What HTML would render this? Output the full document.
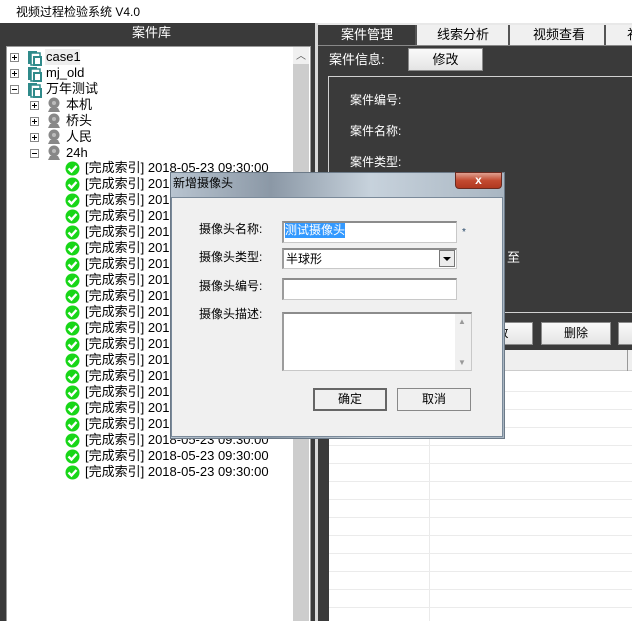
<!DOCTYPE html>
<html><head><meta charset="utf-8"><style>
*{margin:0;padding:0;box-sizing:border-box}
body{width:632px;height:621px;overflow:hidden;background:#fff;position:relative;font-family:"Liberation Sans","Noto Sans CJK SC","WenQuanYi Zen Hei",sans-serif;font-size:12px;color:#000}
.a{position:absolute}
.t{position:absolute;white-space:nowrap;line-height:16px}
.w{color:#fff}
.btn{position:absolute;background:linear-gradient(#fafafa,#e4e4e4);border:1px solid #8a8a8a;text-align:center;line-height:20px;font-size:12px}
.exp{position:absolute;width:9px;height:9px;border:1px solid #888;background:#fff}
.exp:before{content:"";position:absolute;left:1px;top:3px;width:5px;height:1px;background:#000}
.exp.p:after{content:"";position:absolute;left:3px;top:1px;width:1px;height:5px;background:#000}
.inp{position:absolute;background:#fff;border:1px solid #c8c8c8;border-top:2px solid #8c8c8c;border-left:2px solid #9c9c9c}
</style></head><body>
<div class="t" style="left:16px;top:4px;font-size:12px">视频过程检验系统 V4.0</div>
<div class="a" style="left:0;top:23px;width:315px;height:598px;background:#3a3a3a"></div>
<div class="t w" style="left:132px;top:25px;font-size:13px">案件库</div>
<div class="a" style="left:6px;top:46px;width:305px;height:575px;background:#fff;border:1px solid #9a9a9a;border-bottom:none"></div>
<div class="a" style="left:293px;top:47px;width:16px;height:574px;background:#cdcdcd"></div>
<div class="a" style="left:293px;top:47px;width:16px;height:17px;background:#f0f0f0"></div>
<div class="t" style="left:296px;top:49px;font-size:10px;color:#555">︿</div>
<div class="a" style="left:315px;top:23px;width:3px;height:598px;background:#d8d8d8"></div>
<div id="tree"></div>
<div class="a" style="left:318px;top:23px;width:314px;height:598px;background:#3a3a3a"></div>
<div class="a" style="left:318px;top:23px;width:314px;height:2px;background:#e8e8e8"></div>
<div class="a" style="left:415px;top:25px;width:217px;height:20px;background:#f0f0f0"></div>
<div class="a" style="left:508px;top:25px;width:2px;height:20px;background:#555"></div>
<div class="a" style="left:604px;top:25px;width:2px;height:20px;background:#555"></div>
<div class="a" style="left:415px;top:25px;width:2px;height:20px;background:#555"></div>
<div class="t w" style="left:341px;top:27px;font-size:13px">案件管理</div>
<div class="t" style="left:437px;top:27px;font-size:13px">线索分析</div>
<div class="t" style="left:533px;top:27px;font-size:13px">视频查看</div>
<div class="t" style="left:627px;top:27px;font-size:13px">礼</div>
<div class="a" style="left:318px;top:45px;width:314px;height:1px;background:#888"></div>
<div class="t w" style="left:329px;top:52px;font-size:13px">案件信息:</div>
<div class="btn" style="left:408px;top:48px;width:75px;height:23px;line-height:21px;font-size:13px">修改</div>
<div class="a" style="left:328px;top:76px;width:310px;height:237px;border:1px solid #d0d0d0;border-right:none"></div>
<div class="t w" style="left:350px;top:92px">案件编号:</div>
<div class="t w" style="left:350px;top:123px">案件名称:</div>
<div class="t w" style="left:350px;top:154px">案件类型:</div>
<div class="t w" style="left:507px;top:250px;font-size:13px">至</div>
<div class="btn" style="left:460px;top:322px;width:73px;height:23px">修改</div>
<div class="btn" style="left:541px;top:322px;width:70px;height:23px">删除</div>
<div class="btn" style="left:618px;top:322px;width:30px;height:23px"></div>
<div class="a" style="left:329px;top:350px;width:303px;height:271px;background:#fff"></div>
<div class="a" style="left:329px;top:350px;width:303px;height:21px;background:#efefef;border-bottom:1px solid #ccc"></div>
<div class="a" style="left:627px;top:350px;width:1px;height:21px;background:#999"></div>
<div class="a" style="left:429px;top:371px;width:1px;height:250px;background:#eaeaea"></div>
<div id="grid"></div>
<div class="a" style="left:170px;top:172px;width:335px;height:267px;background:linear-gradient(90deg,#b8c4d0,#8b98a6 30%,#c7d2dc 60%,#a9b6c2);border:1px solid #6c7a88"></div>
<div class="t" style="left:173px;top:175px;font-size:12px">新增摄像头</div>
<div class="a" style="left:455px;top:172px;width:47px;height:17px;background:linear-gradient(#e0a090,#c34a30 50%,#b03820);border:1px solid #6a2a20;border-radius:0 0 4px 4px;color:#fff;text-align:center;font-size:12px;font-weight:bold;line-height:14px">x</div>
<div class="a" style="left:171px;top:197px;width:332px;height:240px;background:#f0f0f0;border:1px solid #7a8a9a"></div>
<div class="t" style="left:199px;top:221px">摄像头名称:</div>
<div class="t" style="left:199px;top:249px">摄像头类型:</div>
<div class="t" style="left:199px;top:278px">摄像头编号:</div>
<div class="t" style="left:199px;top:306px">摄像头描述:</div>
<div class="inp" style="left:282px;top:221px;width:175px;height:22px"></div>
<div class="t" style="left:285px;top:223px;background:#3399ff;color:#fff;line-height:15px">测试摄像头</div>
<div class="t" style="left:462px;top:225px;color:#246;font-size:10px">*</div>
<div class="inp" style="left:282px;top:248px;width:175px;height:21px"></div>
<div class="t" style="left:286px;top:251px">半球形</div>
<div class="a" style="left:439px;top:250px;width:16px;height:17px;background:#ececec;border:1px solid #777"></div>
<div class="a" style="left:443px;top:257px;width:0;height:0;border-left:4px solid transparent;border-right:4px solid transparent;border-top:4px solid #000"></div>
<div class="inp" style="left:282px;top:278px;width:175px;height:22px"></div>
<div class="inp" style="left:282px;top:312px;width:190px;height:59px"></div>
<div class="a" style="left:455px;top:314px;width:16px;height:56px;background:#f0f0f0"></div>
<div class="t" style="left:458px;top:314px;font-size:8px;color:#999">▲</div>
<div class="t" style="left:458px;top:355px;font-size:8px;color:#999">▼</div>
<div class="btn" style="left:313px;top:388px;width:74px;height:23px;border:2px solid #666;background:#f0f0f0;line-height:19px">确定</div>
<div class="btn" style="left:397px;top:388px;width:74px;height:23px;background:#f0f0f0;border-color:#888">取消</div>
<script>
var h='';
function ex(x,y,p){h+='<div class="exp'+(p?' p':'')+'" style="left:'+x+'px;top:'+y+'px"></div>';}
function fold(x,y){h+='<svg class="a" style="left:'+x+'px;top:'+y+'px" width="16" height="16"><rect x="1" y="1" width="9" height="13" fill="#2f8a8a"/><rect x="4" y="3" width="9" height="12" fill="#fff" stroke="#2f8a8a" stroke-width="1.5"/><rect x="7" y="7" width="7" height="8" fill="#fff" stroke="#2f8a8a" stroke-width="2"/></svg>';}
function cam(x,y){h+='<svg class="a" style="left:'+x+'px;top:'+y+'px" width="16" height="16"><circle cx="8" cy="6" r="5.5" fill="#888"/><circle cx="8" cy="6" r="2" fill="#bbb"/><path d="M2 15h12l-2-4H4z" fill="#888"/></svg>';}
function chk(x,y){h+='<svg class="a" style="left:'+x+'px;top:'+y+'px" width="15" height="15"><circle cx="7.5" cy="7.5" r="7" fill="#18d618"/><path d="M3.5 7.5l3 3 5-5.5" fill="none" stroke="#fff" stroke-width="2.4"/></svg>';}
function tx(x,y,s){h+='<div class="t" style="left:'+x+'px;top:'+y+'px;font-size:13px">'+s+'</div>';}
h+='<div class="a" style="left:45px;top:49px;width:35px;height:16px;background:#eee"></div>';
var tops=[['case1',1],['mj_old',1],['万年测试',0]];
tops.forEach(function(t,i){var y=49+i*16;ex(10,y+4,t[1]);fold(27,y+1);tx(46,y,t[0]);});
var s=[['本机',1],['桥头',1],['人民',1],['24h',0]];
s.forEach(function(t,i){var y=97+i*16;ex(30,y+4,t[1]);cam(46,y);tx(66,y,t[0]);});
for(var i=0;i<20;i++){var y=160+i*16;chk(65,y+1);tx(85,y,'[完成索引] 2018-05-23 09:30:00');}
document.getElementById('tree').innerHTML=h;
var g='';for(var y=391;y<621;y+=18)g+='<div class="a" style="left:329px;top:'+y+'px;width:303px;height:1px;background:#ebebeb"></div>';
document.getElementById('grid').innerHTML=g;
</script>
</body></html>
